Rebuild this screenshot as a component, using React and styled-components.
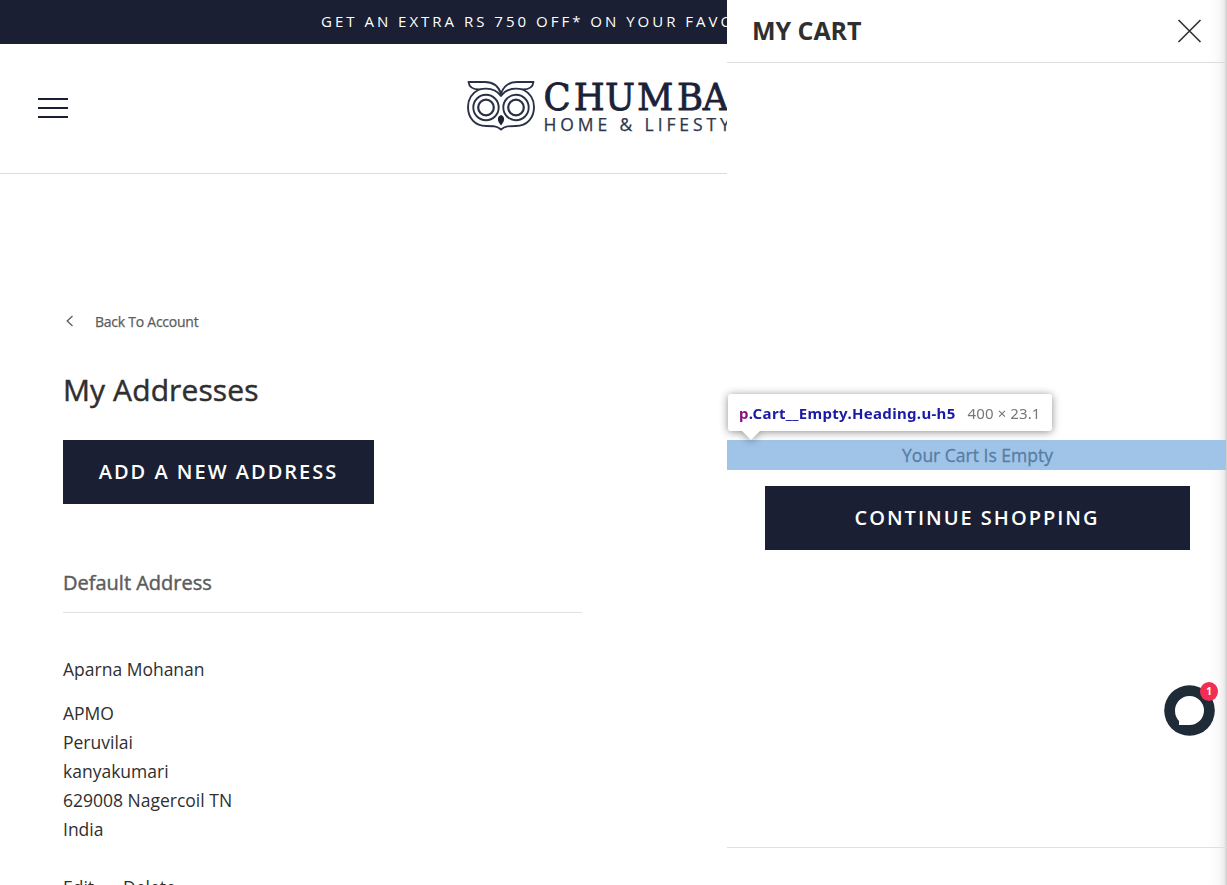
import React from 'react';
import styled, { createGlobalStyle } from 'styled-components';

const GlobalStyle = createGlobalStyle`
  * { box-sizing: border-box; }
  html, body { margin: 0; height: 100%; overflow: hidden; background: #fff; }
  body { font-family: "Open Sans", "Noto Sans", sans-serif; color: #2f2f2f; }
  h1, h2, p { margin: 0; }
  button { font-family: inherit; border: 0; background: none; padding: 0; cursor: pointer; }
`;

const Screen = styled.div`
  position: relative;
  width: 1227px;
  height: 885px;
  overflow: hidden;
`;

const Announcement = styled.div`
  height: 44px;
  padding-left: 321px;
  background: #1b1f33;
  color: #fff;
  font-size: 15px;
  line-height: 42px;
  letter-spacing: 3px;
  white-space: nowrap;
  overflow: hidden;
`;

const Header = styled.header`
  display: flex;
  align-items: flex-start;
  height: 130px;
  border-bottom: 1px solid #dcdcdc;
`;

const MenuButton = styled.button`
  display: flex;
  flex-direction: column;
  gap: 7px;
  width: 30px;
  margin: 54px 0 0 38px;
`;

const MenuBar = styled.span`
  height: 2px;
  width: 30px;
  background: #1b1f33;
`;

const Logo = styled.svg`
  display: block;
  margin: 26px 0 0 392px;
`;

const Content = styled.main`
  display: flex;
  flex-direction: column;
  align-items: flex-start;
  padding: 137px 0 0 63px;
`;

const BackLink = styled.a`
  display: flex;
  align-items: center;
  gap: 21px;
  height: 20px;
  padding-left: 3px;
  color: #5c5c5c;
  font-size: 14px;
  letter-spacing: -0.25px;
  -webkit-text-stroke: 0.25px currentColor;
`;

const Title = styled.h1`
  margin-top: 39px;
  height: 40px;
  line-height: 40px;
  font-size: 30px;
  font-weight: 400;
  letter-spacing: 0.1px;
  -webkit-text-stroke: 0.45px currentColor;
`;

const PrimaryButton = styled.button`
  width: ${({ $width }) => $width}px;
  height: 64px;
  margin-top: ${({ $top }) => $top}px;
  padding-bottom: 2px;
  background: #1b1f33;
  color: #fff;
  font-size: 20px;
  font-weight: 600;
  letter-spacing: 2px;
  white-space: nowrap;
`;

const SectionTitle = styled.h2`
  width: 519px;
  margin-top: 64px;
  height: 45px;
  border-bottom: 1px solid #e0e0e0;
  color: #5c5c5c;
  font-size: 20px;
  font-weight: 400;
  line-height: 30px;
  -webkit-text-stroke: 0.45px currentColor;
`;

const Name = styled.p`
  margin-top: 42px;
  font-size: 17.5px;
  line-height: 29px;
`;

const Address = styled.p`
  margin-top: 15px;
  font-size: 17.5px;
  line-height: 29px;
`;

const Actions = styled.div`
  display: flex;
  gap: 29px;
  margin-top: 29px;
  font-size: 17.5px;
  line-height: 29px;
`;

const Drawer = styled.aside`
  position: absolute;
  top: 0;
  right: 0;
  display: flex;
  flex-direction: column;
  width: 500px;
  height: 885px;
  background: linear-gradient(to right, #fff 0 480px, #fafafa 491px, #f0f0f0 496px, #ddd 499px, #c4c4c4 500px);
`;

const DrawerHeader = styled.div`
  display: flex;
  align-items: center;
  justify-content: space-between;
  height: 63px;
  padding: 0 25px 2px;
  border-bottom: 1px solid #dcdcdc;
`;

const DrawerTitle = styled.h2`
  font-size: 25px;
  line-height: 60px;
  font-weight: 700;
  letter-spacing: -0.05px;
`;

const CloseButton = styled.button`
  display: flex;
  padding-top: 1px;
`;

const DrawerBody = styled.div`
  display: flex;
  flex: 1;
  flex-direction: column;
  align-items: center;
  padding-top: 377px;
`;

const EmptyMessage = styled.p`
  align-self: flex-start;
  width: 499px;
  height: 30px;
  padding-left: 2px;
  background: #a0c4e8;
  color: #567da3;
  font-size: 17.5px;
  line-height: 30px;
  text-align: center;
  -webkit-text-stroke: 0.3px currentColor;
`;

const DrawerFooter = styled.div`
  height: 38px;
  border-top: 1px solid #e0e0e0;
`;

const Inspector = styled.div`
  position: absolute;
  left: 728px;
  top: 394px;
  display: flex;
  gap: 12px;
  width: 324px;
  height: 37px;
  padding-left: 11px;
  border-radius: 3px;
  background: #fff;
  font-family: "Noto Sans", "Open Sans", sans-serif;
  font-size: 15px;
  line-height: 38px;
  white-space: nowrap;
  filter: drop-shadow(0 1px 4px rgba(0, 0, 0, 0.45));

  &::after {
    content: '';
    position: absolute;
    top: 37px;
    left: 14px;
    border: 9px solid transparent;
    border-top-color: #fff;
    border-bottom: 0;
  }
`;

const Selector = styled.span`
  color: #1a1aa6;
  font-weight: 700;
  letter-spacing: 0.33px;
`;

const TagName = styled.span`
  color: #881280;
`;

const Size = styled.span`
  color: #777;
  letter-spacing: 0.1px;
`;

const ChatButton = styled.button`
  position: absolute;
  left: 1164px;
  top: 685px;
  width: 51px;
  height: 51px;
`;

const Badge = styled.span`
  position: absolute;
  right: -3px;
  top: -3px;
  width: 18px;
  height: 19px;
  border-radius: 50%;
  background: #f22e52;
  color: #fff;
  font-size: 10px;
  font-weight: 700;
  line-height: 19px;
  text-align: center;
`;

const OwlLogo = () => (
  <Logo width="340" height="70" viewBox="460 70 340 70">
    <g fill="none" stroke="#2a3146" strokeWidth="1.900" strokeLinejoin="round">
      <path d="M501 93.500C498 85 493 82 485 82H468.500C469 86 472 89.500 479 89.500C488 87.500 496 89 501 96C506 89 514 87.500 523 89.500C530 89.500 533 86 533.500 82H517C509 82 504 85 501 93.500Z" />
      <path d="M479 89.500C472 93 468 99 468 107C468 118 475 126 486 126C493 126 497 126 501 129.500C505 126 509 126 516 126C527 126 534 118 534 107C534 99 530 93 523 89.500" />
      <circle cx="486" cy="107.500" r="12.700" />
      <circle cx="516" cy="107.500" r="12.700" />
      <circle cx="486" cy="107.500" r="7.800" strokeWidth="2.200" />
      <circle cx="516" cy="107.500" r="7.800" strokeWidth="2.200" />
    </g>
    <path d="M501 115C505.500 117 504.800 121 501 125.500C497.200 121 496.500 117 501 115Z" fill="#1b2238" />
    <g transform="translate(543.500 109.500) scale(.96 1)" fill="#1b2238" stroke="#1b2238" strokeWidth=".8">
      <text x="0 31.500 64 97.500 139 166 196" y="0" fontFamily="DejaVu Serif, serif" fontSize="37">CHUMBAK</text>
    </g>
    <text x="543.500" y="131" fill="#30364a" stroke="#30364a" strokeWidth=".25" fontFamily="Open Sans, sans-serif" fontSize="17.500" letterSpacing="3.900">HOME &amp; LIFESTYLE</text>
  </Logo>
);

export default function App() {
  return (
    <>
      <GlobalStyle />
      <Screen>
        <Announcement>GET AN EXTRA RS 750 OFF* ON YOUR FAVO</Announcement>
        <Header>
          <MenuButton aria-label="Menu"><MenuBar /><MenuBar /><MenuBar /></MenuButton>
          <OwlLogo />
        </Header>
        <Content>
          <BackLink>
            <svg width="8" height="12" viewBox="0 0 8 12" fill="none" stroke="#5c5c5c" strokeWidth="1.300"><path d="M6.500 1L1.200 6L6.500 11" /></svg>
            Back To Account
          </BackLink>
          <Title>My Addresses</Title>
          <PrimaryButton $width={311} $top={30}>ADD A NEW ADDRESS</PrimaryButton>
          <SectionTitle>Default Address</SectionTitle>
          <Name>Aparna Mohanan</Name>
          <Address>APMO<br />Peruvilai<br />kanyakumari<br />629008 Nagercoil TN<br />India</Address>
          <Actions><span>Edit</span><span>Delete</span></Actions>
        </Content>
        <Drawer>
          <DrawerHeader>
            <DrawerTitle>MY CART</DrawerTitle>
            <CloseButton aria-label="Close">
              <svg width="25" height="24" viewBox="0 0 25 24" stroke="#303030" strokeWidth="1.600"><path d="M1.500 1L23.500 23M23.500 1L1.500 23" /></svg>
            </CloseButton>
          </DrawerHeader>
          <DrawerBody>
            <EmptyMessage>Your Cart Is Empty</EmptyMessage>
            <PrimaryButton $width={425} $top={16}>CONTINUE SHOPPING</PrimaryButton>
          </DrawerBody>
          <DrawerFooter />
        </Drawer>
        <Inspector>
          <Selector><TagName>p</TagName>.Cart__Empty.Heading.u-h5</Selector>
          <Size>400 × 23.1</Size>
        </Inspector>
        <ChatButton aria-label="Chat">
          <svg width="51" height="51" viewBox="0 0 51 51">
            <circle cx="25.500" cy="25.500" r="25.300" fill="#202b38" />
            <path d="M25.500 11A14.500 14.500 0 1 1 25.500 40H15V36Q11 32 11 25.500A14.500 14.500 0 0 1 25.500 11Z" fill="#fff" />
          </svg>
          <Badge>1</Badge>
        </ChatButton>
      </Screen>
    </>
  );
}
